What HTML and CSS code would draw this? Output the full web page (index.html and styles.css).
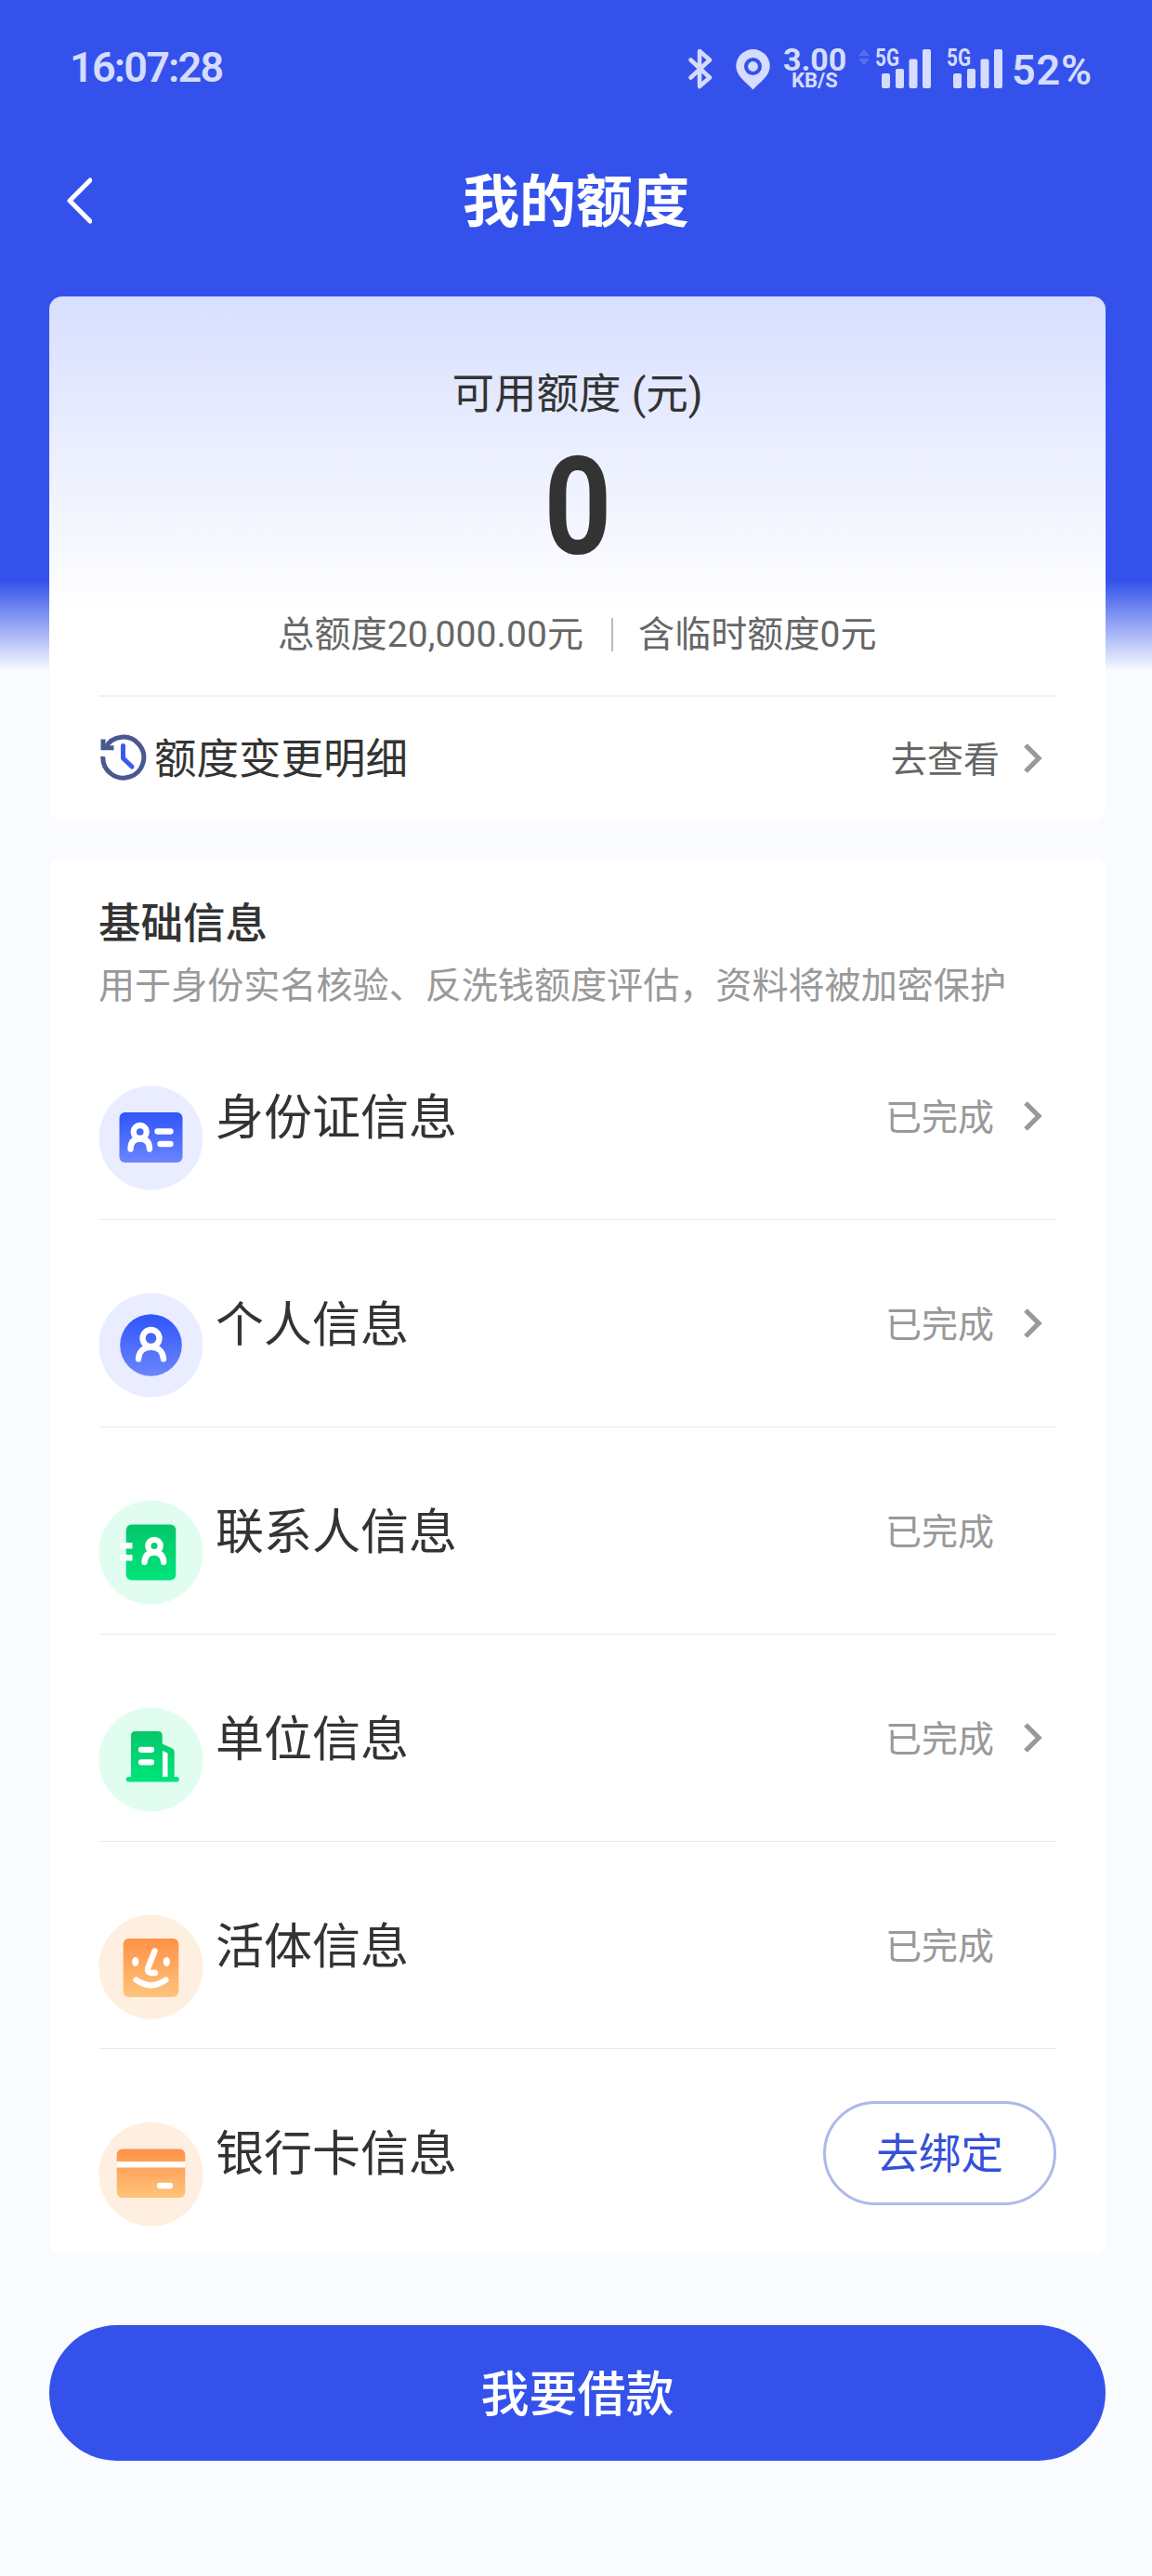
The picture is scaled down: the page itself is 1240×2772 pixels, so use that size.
FILE: index.html
```html
<!DOCTYPE html>
<html lang="zh-CN">
  <head>
    <meta charset="UTF-8" />
    <meta name="viewport" content="width=device-width, initial-scale=1.0" />
    <title>我的额度</title>
    <link rel="stylesheet" href="styles.css" />
  </head>
  <body>
    <!-- shared gradients -->
    <svg class="defs" width="0" height="0">
      <defs>
        <linearGradient id="blue" x1="0" y1="0" x2="0" y2="1">
          <stop offset="0" stop-color="#2f55fa" />
          <stop offset="1" stop-color="#6b85fd" />
        </linearGradient>
        <linearGradient id="green" x1="0" y1="0" x2="0" y2="1">
          <stop offset="0" stop-color="#04c768" />
          <stop offset="1" stop-color="#00e47c" />
        </linearGradient>
        <linearGradient id="orange" x1="0" y1="0" x2="0" y2="1">
          <stop offset="0" stop-color="#ff9146" />
          <stop offset="1" stop-color="#ffc47c" />
        </linearGradient>
      </defs>
    </svg>

    <div class="status-bar">
      <span class="time">16:07:28</span>
      <div class="status-icons">
        <svg class="bluetooth" width="26" height="44" viewBox="0 0 26 44">
          <path d="M2.5 12.5 L23 31.5 L12 41 V3 L23 12.5 L2.5 31.5" />
        </svg>
        <svg class="pin" width="37" height="44" viewBox="0 0 37 44">
          <path fill-rule="evenodd" d="M18.5 0 A18.2 18.2 0 0 1 36.7 18.2 C36.7 29 26 35 18.5 43.5 C11 35 .3 29 .3 18.2 A18.2 18.2 0 0 1 18.5 0 Z M18.5 9 a9.5 9.5 0 1 0 0 19 a9.5 9.5 0 1 0 0 -19 Z" />
          <circle cx="18.5" cy="18.5" r="5.4" />
        </svg>
        <div class="speed"><b>3.00</b><span>KB/S</span></div>
        <svg class="updown" width="12" height="18" viewBox="0 0 12 18">
          <path d="M6 0 L12 7 H0 Z M0 10 H12 L6 17 Z" />
        </svg>
        <svg class="signal" width="61" height="46" viewBox="0 0 61 46">
          <text x="0" y="20" textLength="26" lengthAdjust="spacingAndGlyphs">5G</text>
          <rect x="7" y="28" width="9" height="16" rx="2" />
          <rect x="22" y="23" width="9" height="21" rx="2" />
          <rect x="36.500" y="12.500" width="9" height="31.500" rx="2" />
          <rect x="51" y="2" width="9" height="42" rx="2" />
        </svg>
        <svg class="signal second" width="61" height="46" viewBox="0 0 61 46">
          <text x="0" y="20" textLength="26" lengthAdjust="spacingAndGlyphs">5G</text>
          <rect x="7" y="28" width="9" height="16" rx="2" />
          <rect x="22" y="23" width="9" height="21" rx="2" />
          <rect x="36.500" y="12.500" width="9" height="31.500" rx="2" />
          <rect x="51" y="2" width="9" height="42" rx="2" />
        </svg>
        <span class="battery">52%</span>
      </div>
    </div>

    <header class="header">
      <svg class="back" width="30" height="52" viewBox="0 0 30 52">
        <path d="M28 4 L6 26 L28 48" />
      </svg>
      <h1>我的额度</h1>
    </header>

    <main>
      <section class="card quota">
        <div class="quota-label">可用额度 (元)</div>
        <div class="quota-num"><span>0</span></div>
        <div class="quota-sum">
          <span>总额度20,000.00元</span>
          <i></i>
          <span>含临时额度0元</span>
        </div>
        <div class="history">
          <svg width="52" height="52" viewBox="0 0 52 52">
            <path class="ring" d="M7.500 14.500 A22 22 0 1 1 4.800 24" />
            <path class="tip" d="M5 5.500 V14.800 H16.500" />
            <path class="hand" d="M26.500 12.500 V26 L36 35" />
          </svg>
          <span class="history-name">额度变更明细</span>
          <span class="go">去查看</span>
          <svg class="arrow" width="22" height="36" viewBox="0 0 22 36"><path d="M4 4 L18 18 L4 32" /></svg>
        </div>
      </section>

      <section class="card info">
        <h2>基础信息</h2>
        <p>用于身份实名核验、反洗钱额度评估，资料将被加密保护</p>
        <ul>
          <li>
            <svg class="icon" width="113" height="113" viewBox="0 0 113 113">
              <circle cx="56.500" cy="56.500" r="56" fill="#eaedff" />
              <rect x="22.500" y="29" width="68" height="54" rx="6" fill="url(#blue)" />
              <g class="line">
                <circle cx="44.700" cy="50" r="7" />
                <path d="M34.500 68.500 C34.500 61 38 57.500 44.700 57.500 S55 61 55 68.500" />
                <path d="M63.500 49.500 H77.500 M66.500 63 H77.500" />
              </g>
            </svg>
            <span class="name">身份证信息</span>
            <span class="state">已完成</span>
            <svg class="arrow" width="22" height="36" viewBox="0 0 22 36"><path d="M4 4 L18 18 L4 32" /></svg>
          </li>
          <li>
            <svg class="icon" width="113" height="113" viewBox="0 0 113 113">
              <circle cx="56.500" cy="56.500" r="56" fill="#eaedff" />
              <circle cx="56.500" cy="56.500" r="33.300" fill="url(#blue)" />
              <g class="line">
                <circle cx="56.500" cy="49" r="9" />
                <path d="M43 71.500 C43.500 63 49 58.500 56.500 58.500 S69.500 63 70 71.500" />
              </g>
            </svg>
            <span class="name">个人信息</span>
            <span class="state">已完成</span>
            <svg class="arrow" width="22" height="36" viewBox="0 0 22 36"><path d="M4 4 L18 18 L4 32" /></svg>
          </li>
          <li>
            <svg class="icon" width="113" height="113" viewBox="0 0 113 113">
              <circle cx="56.500" cy="56.500" r="56" fill="#e1fdef" />
              <rect x="29.700" y="26.500" width="53.600" height="60" rx="6" fill="url(#green)" />
              <path d="M23.500 46 H36.500 V52.500 H23.500 Z M23.500 59 H36.500 V65.500 H23.500 Z" fill="#fff" />
              <g class="line">
                <circle cx="60" cy="49.500" r="6.700" />
                <path d="M49.500 67 C50 60 53.500 56.500 60 56.500 S69.700 60 70.200 67" />
              </g>
            </svg>
            <span class="name">联系人信息</span>
            <span class="state">已完成</span>
          </li>
          <li>
            <svg class="icon" width="113" height="113" viewBox="0 0 113 113">
              <circle cx="56.500" cy="56.500" r="56" fill="#e1fdef" />
              <path fill="url(#green)" d="M35 75 V30.500 Q35 26 39.500 26 H64 Q68.700 26 68.700 30.500 V39.500 L79.500 44.500 Q81.700 45.500 81.700 48 V75 H84 A2.700 2.700 0 0 1 84 80.500 H32.500 A2.700 2.700 0 0 1 32.500 75 Z" />
              <path fill="#fff" d="M69 47 L74.500 49.500 V75 H69 Z" />
              <path class="line" d="M46 45.800 H57 M46 59.300 H57" />
            </svg>
            <span class="name">单位信息</span>
            <span class="state">已完成</span>
            <svg class="arrow" width="22" height="36" viewBox="0 0 22 36"><path d="M4 4 L18 18 L4 32" /></svg>
          </li>
          <li>
            <svg class="icon" width="113" height="113" viewBox="0 0 113 113">
              <circle cx="56.500" cy="56.500" r="56" fill="#feefe0" />
              <rect x="26.700" y="26" width="59.600" height="63" rx="6" fill="url(#orange)" />
              <ellipse cx="39.700" cy="51" rx="3.600" ry="5" fill="#fff" />
              <ellipse cx="73.300" cy="51" rx="3.600" ry="5" fill="#fff" />
              <g class="line">
                <path d="M60.500 39.500 L53.500 57 Q51.500 63 57 63 H61" />
                <path d="M40.500 70.500 Q56.500 82 72.500 70.500" />
              </g>
            </svg>
            <span class="name">活体信息</span>
            <span class="state">已完成</span>
          </li>
          <li>
            <svg class="icon" width="113" height="113" viewBox="0 0 113 113">
              <circle cx="56.500" cy="56.500" r="56" fill="#feefe0" />
              <rect x="19.700" y="29.500" width="73.600" height="52.500" rx="6" fill="url(#orange)" />
              <path fill="#fff" d="M19.500 43 H93.500 V49.500 H19.500 Z" />
              <path class="line" d="M66 69 H77" />
            </svg>
            <span class="name">银行卡信息</span>
            <button class="bind">去绑定</button>
          </li>
        </ul>
      </section>

      <button class="loan">我要借款</button>
    </main>
  </body>
</html>
```
FILE: styles.css
```css
* {
  box-sizing: border-box;
}

body {
  margin: 0;
  height: 2772px;
  background: linear-gradient(#3452eb 625px, #f9fbff 722px);
  background-color: #f9fbff;
  background-repeat: no-repeat;
  font-family: Roboto, "Noto Sans CJK SC", sans-serif;
  color: #333;
}

h1,
h2,
p,
ul {
  margin: 0;
  padding: 0;
}

svg {
  display: block;
  flex: none;
}

button {
  font-family: inherit;
  padding: 0;
}

.defs {
  position: absolute;
}

/* status bar */
.status-bar {
  height: 147px;
  padding: 0 64px 0 75px;
  display: flex;
  justify-content: space-between;
  color: #d6dcff;
  fill: #d6dcff;
  font-weight: 600;
}

.time {
  margin-top: 46px;
  font-size: 45px;
  line-height: 53px;
  letter-spacing: -1.8px;
}

.status-icons {
  display: flex;
  align-items: flex-start;
  padding-top: 51px;
}

.bluetooth {
  margin-top: 1px;
  margin-right: 25px;
  fill: none;
  stroke: #d6dcff;
  stroke-width: 4.5;
  stroke-linejoin: round;
  stroke-linecap: round;
}

.pin {
  margin-top: 2px;
  margin-right: 14px;
}

.speed {
  width: 68px;
  margin-right: 13px;
  text-align: center;
  display: flex;
  flex-direction: column;
}

.speed b {
  font-size: 34px;
  line-height: 26px;
  font-weight: 700;
}

.speed span {
  font-size: 22px;
  line-height: 20px;
  font-weight: 700;
}

.updown {
  margin-top: 2px;
  margin-right: 6px;
  fill: #5570f0;
}

.signal {
  overflow: visible;
}

.signal text {
  font-size: 26px;
  font-weight: 700;
}

.second {
  margin-left: 16px;
}

.battery {
  margin-left: 9px;
  margin-top: -2px;
  font-size: 45px;
  line-height: 53px;
  letter-spacing: 0.8px;
}

/* title */
.header {
  height: 172px;
  padding-left: 69px;
  display: flex;
}

.back {
  margin-top: 43px;
}

.back path {
  fill: none;
  stroke: #fff;
  stroke-width: 5;
  stroke-linecap: round;
  stroke-linejoin: round;
}

.header h1 {
  flex: 1;
  margin-right: 99px;
  text-align: center;
  font-size: 61px;
  line-height: 143px;
  color: #fff;
}

main {
  padding: 0 50px 0 53px;
}

.card {
  border-radius: 14px;
  background: #fff;
  padding: 0 53px;
}

/* quota */
.quota {
  height: 564px;
  background: linear-gradient(#d8dfff, #fff 340px);
}

.quota-label {
  padding-top: 76px;
  text-align: center;
  font-size: 45.5px;
  line-height: 60px;
}

.quota-num {
  height: 170px;
  text-align: center;
  font-size: 146px;
  line-height: 184px;
  font-weight: 700;
}

.quota-num span {
  display: inline-block;
  transform: scaleX(0.87);
}

.quota-sum {
  height: 125px;
  padding-top: 32px;
  display: flex;
  justify-content: center;
  font-size: 39px;
  line-height: 52px;
  letter-spacing: 0.1px;
  color: #666;
  border-bottom: 2px solid #f1f1f3;
}

.quota-sum i {
  width: 2px;
  height: 36px;
  margin: 8px 27px 0 30px;
  background: #bbb;
}

.history {
  height: 132px;
  display: flex;
  align-items: center;
}

.history path {
  fill: none;
  stroke: #49598f;
  stroke-width: 5;
}

.history .hand {
  stroke: #3a5af5;
  stroke-linecap: round;
  stroke-linejoin: round;
}

.history-name {
  flex: 1;
  margin-left: 8px;
  font-size: 45.5px;
  padding-bottom: 6px;
}

.go,
.state {
  font-size: 39px;
  color: #666;
  padding-bottom: 5px;
}

.arrow {
  margin-left: 24px;
  margin-right: 15px;
}

.arrow path,
.history .arrow path {
  fill: none;
  stroke: #999;
  stroke-width: 5.3;
}

/* info list */
.info {
  margin-top: 39px;
  height: 1504px;
}

.info h2 {
  padding-top: 39px;
  font-size: 45.5px;
  line-height: 68px;
  font-weight: 500;
}

.info p {
  height: 61px;
  font-size: 39.1px;
  line-height: 65px;
  color: #999;
  white-space: nowrap;
}

.info li {
  height: 223px;
  display: flex;
  align-items: center;
  border-bottom: 1px solid #ebebed;
}

.info li:last-child {
  border: none;
}

.icon {
  margin-top: 46px;
}

.line {
  fill: none;
  stroke: #fff;
  stroke-width: 6.3;
  stroke-linecap: round;
}

.name {
  flex: 1;
  margin-left: 13px;
  font-size: 52px;
  padding-bottom: 6px;
}

.state {
  margin-right: 6px;
  color: #999;
}

/* rows without an arrow keep its space */
.state:last-child {
  margin-right: 67px;
}

.bind {
  width: 251px;
  height: 112px;
  border: 3px solid #aeb9ea;
  border-radius: 56px;
  background: #fff;
  font-size: 45.5px;
  color: #3450d8;
  padding-bottom: 5px;
}

.loan {
  display: block;
  width: 100%;
  height: 146px;
  margin-top: 76px;
  border: none;
  border-radius: 73px;
  background: #3452eb;
  color: #fff;
  font-size: 52px;
  font-weight: 500;
  padding-bottom: 5px;
}
```
